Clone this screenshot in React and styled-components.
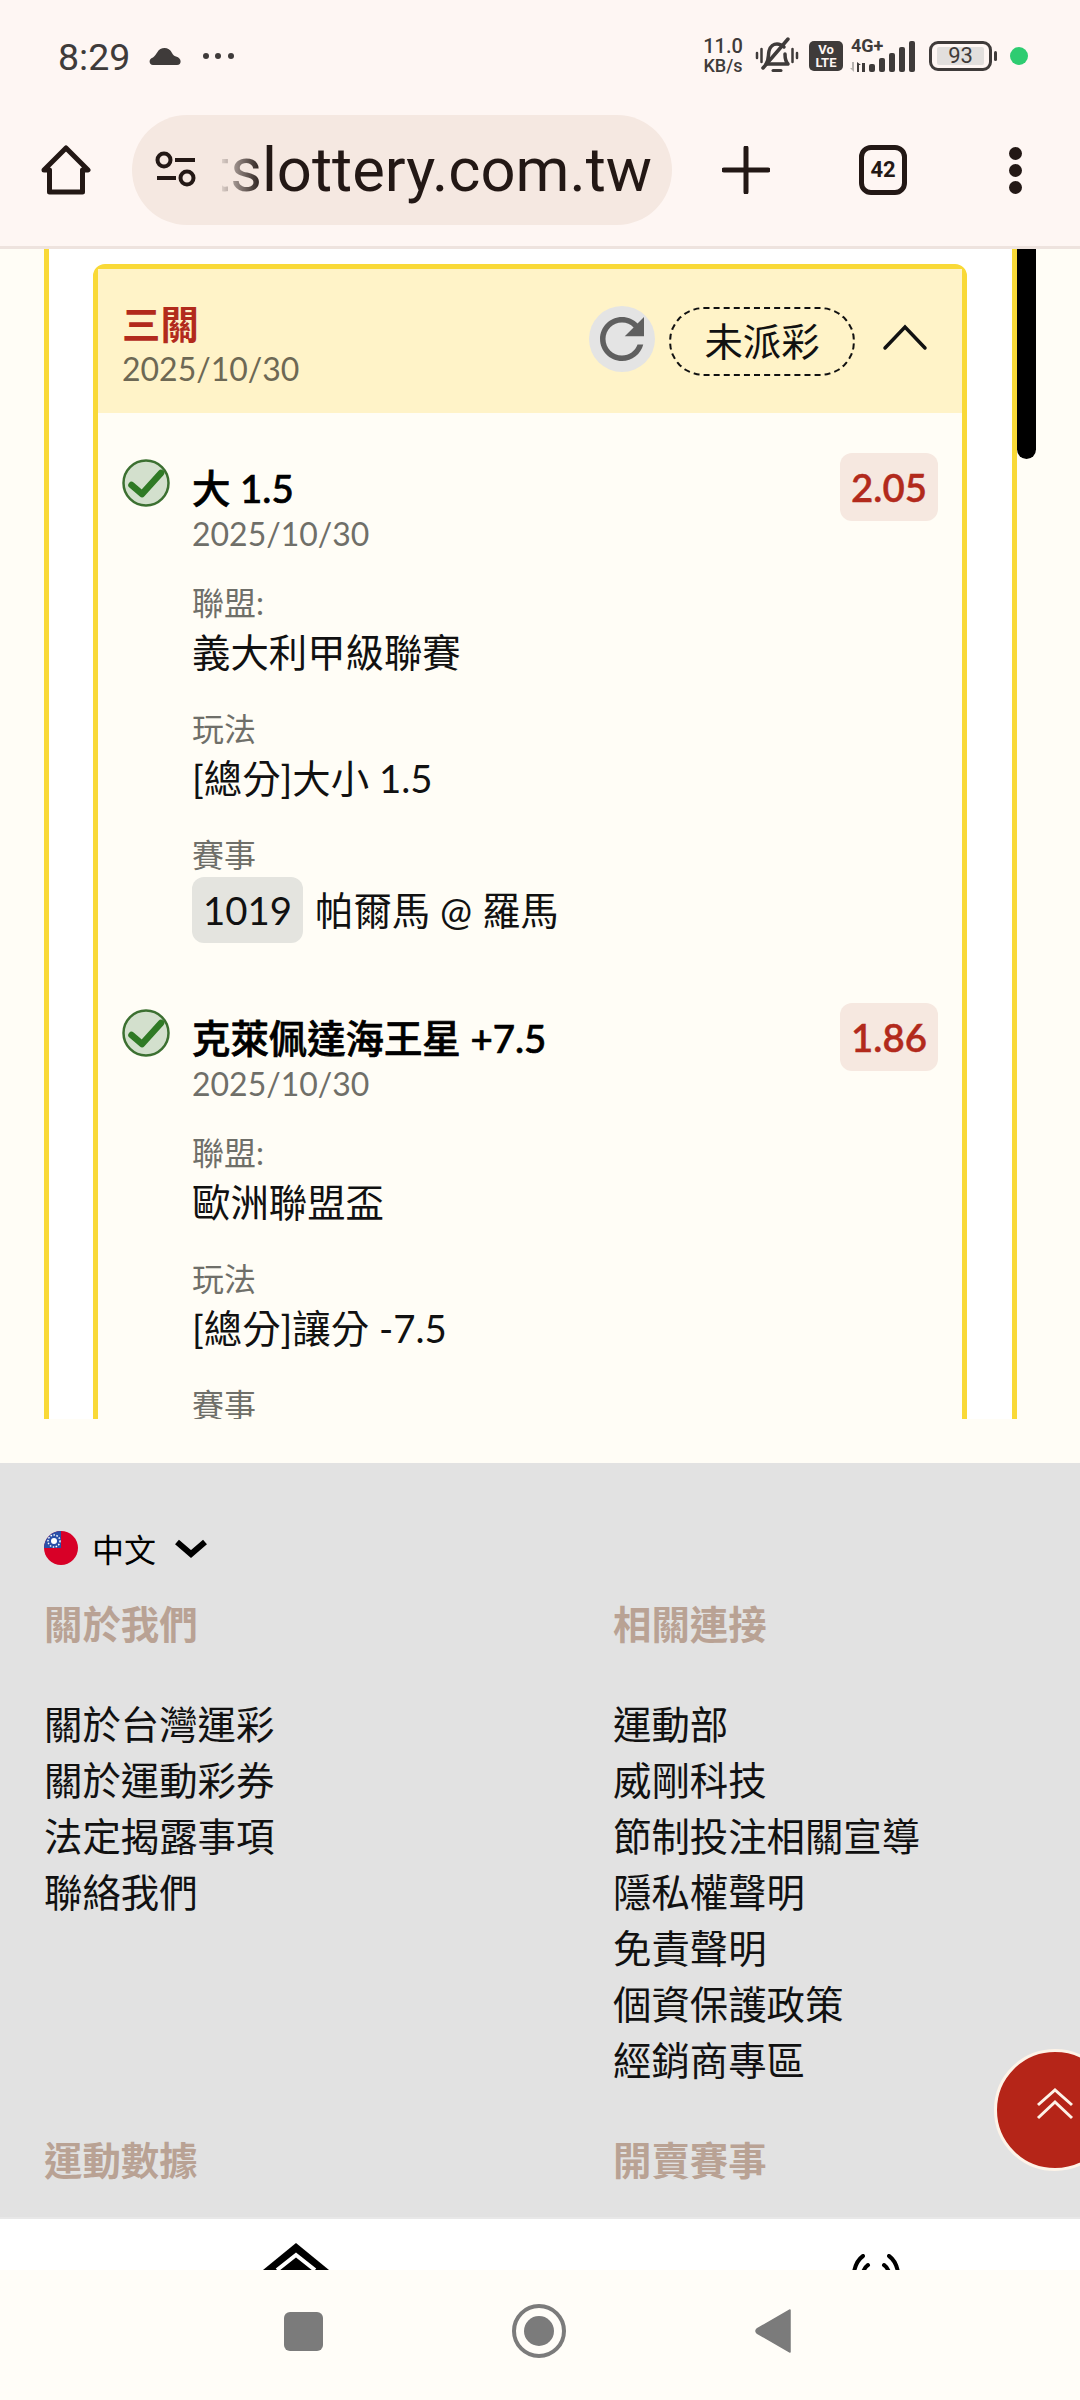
import React from "react";
import styled, { createGlobalStyle } from "styled-components";

const GlobalStyle = createGlobalStyle`
  html, body {
    margin: 0;
    padding: 0;
    background: #fffdf6;
  }
  * {
    box-sizing: border-box;
  }
`;

const picks = [
  {
    name: "大 1.5",
    odds: "2.05",
    league: "義大利甲級聯賽",
    play: "[總分]大小 1.5",
    code: "1019",
    game: "帕爾馬 @ 羅馬",
  },
  {
    name: "克萊佩達海王星 +7.5",
    odds: "1.86",
    league: "歐洲聯盟盃",
    play: "[總分]讓分 -7.5",
  },
];

const aboutLinks = ["關於台灣運彩", "關於運動彩券", "法定揭露事項", "聯絡我們"];
const relatedLinks = [
  "運動部",
  "威剛科技",
  "節制投注相關宣導",
  "隱私權聲明",
  "免責聲明",
  "個資保護政策",
  "經銷商專區",
];

const CheckIcon = () => (
  <svg width="48" height="48" viewBox="0 0 48 48">
    <circle cx="24" cy="24" r="22.5" fill="#d3e0cd" stroke="#3c7031" strokeWidth="2.5" />
    <path d="M9.5 26 L20 35 L39 14" fill="none" stroke="#2f7a25" strokeWidth="6.5" strokeLinejoin="round" strokeLinecap="round" />
  </svg>
);

const App = () => {
  return (
    <Screen>
      <GlobalStyle />
      <StatusBar>
        <Time>8:29</Time>
        <svg width="36" height="20" viewBox="0 0 36 20">
          <path d="M5 19 C1 19 0 13 5 11.500 C7 10 8 8 9.500 6 C12 1 21 0 24 7 C25 9 26 10 28 10.500 C34 12 34 19 29 19 Z" fill="#3f3b3a" />
        </svg>
        <svg width="34" height="8" viewBox="0 0 34 8">
          <circle cx="4" cy="4" r="3" fill="#3f3b3a" />
          <circle cx="16" cy="4" r="3" fill="#3f3b3a" />
          <circle cx="29" cy="4" r="3" fill="#3f3b3a" />
        </svg>
        <StatusRight>
          <Speed>
            <span>11.0</span>
            <small>KB/s</small>
          </Speed>
          <svg width="44" height="38" viewBox="0 0 44 38">
            <g fill="none" stroke="#3f3b3a" strokeLinecap="round">
              <path d="M11 27 C14 23 13 19 14 14 C15 9 19 7 22 7 C25 7 27 8 29 10 M30 17 C30 21 30 24 33 27 M11 27 H33" strokeWidth="3.5" />
              <path d="M8 31 L33 2" strokeWidth="3.500" />
              <path d="M2 16 V21 M6.500 12 V25 M37.500 12 V25 M42 16 V21" strokeWidth="2.500" />
              <path d="M18 33.500 H26" strokeWidth="3" />
            </g>
          </svg>
          <Volte>
            <span>Vo</span>
            <span>LTE</span>
          </Volte>
          <Network>
            <NetworkLabel>4G+</NetworkLabel>
            <svg width="67" height="32" viewBox="0 0 67 32">
              <g fill="#3f3b3a">
                <path d="M8 31 V21 L12 24 H10 V31 Z" />
                <rect x="13" y="22" width="3" height="9" />
                <rect x="20" y="23" width="6" height="8" rx="2" />
                <rect x="30" y="17" width="6" height="14" rx="2" />
                <rect x="40" y="12" width="6" height="19" rx="2" />
                <rect x="50" y="6" width="6" height="25" rx="2" />
                <rect x="60" y="0" width="6" height="31" rx="2" />
              </g>
              <path d="M5 21 V31 L1 27 H3 V21 Z" fill="#b5b1ae" />
            </svg>
          </Network>
          <Battery>
            <BatteryLevel>93</BatteryLevel>
          </Battery>
          <BatteryNub />
          <GreenDot />
        </StatusRight>
      </StatusBar>

      <Toolbar>
        <svg width="50" height="50" viewBox="0 0 50 50">
          <path d="M3 25 L25 3 L47 25 H41.500 V47 H8.500 V25 Z" fill="none" stroke="#231815" strokeWidth="5" strokeLinejoin="round" />
        </svg>
        <UrlPill>
          <svg width="44" height="38" viewBox="0 0 44 38">
            <g fill="none" stroke="#231815" strokeWidth="4">
              <circle cx="9" cy="9" r="6.500" />
              <circle cx="32" cy="27" r="6.500" />
              <path d="M20 9 H40 M2 27 H21" />
            </g>
          </svg>
          <UrlClip>
            <UrlText>tslottery.com.tw</UrlText>
          </UrlClip>
        </UrlPill>
        <svg width="48" height="48" viewBox="0 0 48 48">
          <path d="M24 2 V46 M2 24 H46" stroke="#231815" strokeWidth="5" strokeLinecap="round" />
        </svg>
        <TabCount>42</TabCount>
        <MenuDots>
          <i />
          <i />
          <i />
        </MenuDots>
      </Toolbar>

      <Content>
        <Panel>
          <Card>
            <CardHeader>
              <CardHeading>
                <CardTitle>三關</CardTitle>
                <CardDate>2025/10/30</CardDate>
              </CardHeading>
              <HeaderActions>
                <RefreshButton>
                  <svg width="66" height="66" viewBox="0 0 24 24">
                    <path
                      fill="#5f5f5f"
                      d="M17.650 6.350C16.200 4.900 14.210 4 12 4c-4.420 0-7.990 3.580-7.990 8s3.570 8 7.990 8c3.730 0 6.840-2.550 7.730-6h-2.080c-.82 2.330-3.040 4-5.650 4-3.310 0-6-2.690-6-6s2.690-6 6-6c1.660 0 3.140.69 4.220 1.780L13 11h7V4l-2.350 2.350z"
                    />
                  </svg>
                </RefreshButton>
                <StatusBadge>未派彩</StatusBadge>
                <svg width="46" height="28" viewBox="0 0 46 28">
                  <path d="M3 25 L23 4 L43 25" fill="none" stroke="#111" strokeWidth="3.500" strokeLinecap="round" />
                </svg>
              </HeaderActions>
            </CardHeader>
            <CardBody>
              {picks.map((pick) => (
                <Pick key={pick.name}>
                  <CheckWrap>
                    <CheckIcon />
                  </CheckWrap>
                  <PickMain>
                    <PickName>{pick.name}</PickName>
                    <PickDate>2025/10/30</PickDate>
                    <Field>
                      <FieldLabel>聯盟:</FieldLabel>
                      <FieldValue>{pick.league}</FieldValue>
                    </Field>
                    <Field>
                      <FieldLabel>玩法</FieldLabel>
                      <FieldValue>{pick.play}</FieldValue>
                    </Field>
                    <Field>
                      <FieldLabel>賽事</FieldLabel>
                      {pick.code && (
                        <GameRow>
                          <GameCode>{pick.code}</GameCode>
                          <FieldValue>{pick.game}</FieldValue>
                        </GameRow>
                      )}
                    </Field>
                  </PickMain>
                  <Odds>{pick.odds}</Odds>
                </Pick>
              ))}
            </CardBody>
          </Card>
        </Panel>
        <ScrollThumb />
      </Content>

      <Footer>
        <Language>
          <svg width="34" height="34" viewBox="0 0 34 34">
            <circle cx="17" cy="17" r="17" fill="#d80027" />
            <path d="M0 17 A17 17 0 0 1 17 0 V17 Z" fill="#2a4fa8" />
            <circle cx="10" cy="10" r="6" fill="none" stroke="#fff" strokeWidth="1.500" strokeDasharray="1.500 1.500" />
            <circle cx="10" cy="10" r="3" fill="#fff" />
          </svg>
          <LanguageName>中文</LanguageName>
          <svg width="34" height="20" viewBox="0 0 34 20">
            <path d="M3 4 L17 16 L31 4" fill="none" stroke="#000" strokeWidth="6" />
          </svg>
        </Language>
        <FooterGrid>
          <div>
            <FooterHeading>關於我們</FooterHeading>
            {aboutLinks.map((link) => (
              <FooterLink key={link}>{link}</FooterLink>
            ))}
          </div>
          <div>
            <FooterHeading>相關連接</FooterHeading>
            {relatedLinks.map((link) => (
              <FooterLink key={link}>{link}</FooterLink>
            ))}
          </div>
          <FooterHeading>運動數據</FooterHeading>
          <FooterHeading>開賣賽事</FooterHeading>
        </FooterGrid>
      </Footer>

      <BottomNav>
        <svg width="66" height="27" viewBox="0 0 66 27">
          <path d="M33 0 L66 27 H0 Z" fill="#000" />
          <path d="M14 27 L33 12 L52 27" fill="none" stroke="#fff" strokeWidth="4" />
        </svg>
        <svg width="50" height="16" viewBox="0 0 50 16">
          <g fill="none" stroke="#000" strokeWidth="4" strokeLinecap="round">
            <path d="M12 2 Q5 7 3 18 M17 11 Q14 13 12 18 M38 2 Q45 7 47 18 M33 11 Q36 13 38 18" />
          </g>
        </svg>
      </BottomNav>

      <SystemNav>
        <RecentKey />
        <svg width="54" height="54" viewBox="0 0 54 54">
          <circle cx="27" cy="27" r="25" fill="none" stroke="#7b7b7b" strokeWidth="4" />
          <circle cx="27" cy="27" r="15" fill="#7b7b7b" />
        </svg>
        <svg width="36" height="46" viewBox="0 0 36 46">
          <path d="M35 2 V44 L2 25 Q0 23 2 21 Z" fill="#7b7b7b" stroke="#7b7b7b" strokeWidth="1.500" strokeLinejoin="round" />
        </svg>
      </SystemNav>

      <ScrollTop>
        <svg width="38" height="32" viewBox="0 0 38 32">
          <path d="M2 17 L19 2 L36 17 M2 30 L19 14 L36 30" fill="none" stroke="#fdf3e8" strokeWidth="3" />
        </svg>
      </ScrollTop>
    </Screen>
  );
};

export default App;

const Screen = styled.div`
  position: relative;
  display: flex;
  flex-direction: column;
  width: 1080px;
  height: 2400px;
  overflow: hidden;
  background: #fffdf6;
  font-family: Lato, "Noto Sans CJK TC", sans-serif;
  color: #111;
`;

const StatusBar = styled.div`
  display: flex;
  align-items: center;
  gap: 18px;
  height: 112px;
  padding: 0 52px 0 58px;
  background: #fef6f3;
  color: #3f3b3a;
`;

const Time = styled.div`
  width: 72px;
  padding-top: 2px;
  font-family: Roboto, sans-serif;
  font-size: 37.5px;
`;

const StatusRight = styled.div`
  display: flex;
  align-items: center;
  margin-left: auto;
  > svg:first-of-type {
    margin-left: 11px;
  }
`;

const Speed = styled.div`
  display: flex;
  flex-direction: column;
  align-items: center;
  width: 42px;
  font-family: Roboto, sans-serif;
  font-weight: 500;
  line-height: 19px;
  font-size: 20px;
  small {
    font-size: 18px;
  }
`;

const Volte = styled.div`
  display: flex;
  flex-direction: column;
  align-items: center;
  width: 34px;
  height: 30px;
  margin-left: 10px;
  padding-top: 2px;
  border-radius: 5px;
  background: #3f3b3a;
  color: #fef5f2;
  font-family: Roboto, sans-serif;
  font-size: 13px;
  font-weight: 700;
  line-height: 13px;
`;

const Network = styled.div`
  position: relative;
  width: 67px;
  height: 34px;
  margin-left: 6px;
  display: flex;
  align-items: flex-end;
`;

const NetworkLabel = styled.span`
  position: absolute;
  left: 2px;
  top: -4px;
  font-family: Roboto, sans-serif;
  font-size: 18px;
  font-weight: 700;
`;

const Battery = styled.div`
  display: flex;
  width: 63px;
  height: 30px;
  margin-left: 13px;
  padding: 3px 5px;
  border: 3px solid #3f3b3a;
  border-radius: 9px;
`;

const BatteryLevel = styled.div`
  flex: 1;
  border-radius: 2px;
  background: #e2dfdd;
  text-align: center;
  font-family: Roboto, sans-serif;
  font-size: 22px;
  line-height: 18px;
`;

const BatteryNub = styled.div`
  width: 3px;
  height: 10px;
  margin-left: 2px;
  border-radius: 2px;
  background: #3f3b3a;
`;

const GreenDot = styled.div`
  width: 18px;
  height: 18px;
  margin-left: 13px;
  border-radius: 50%;
  background: #2ecc71;
`;

const Toolbar = styled.div`
  display: flex;
  align-items: center;
  height: 137px;
  padding: 0 0 18px 41px;
  background: #fef6f3;
  border-bottom: 3px solid #eee3de;
  > svg:first-child {
    margin-right: 41px;
  }
  > svg:nth-child(3) {
    margin-left: 50px;
  }
`;

const UrlPill = styled.div`
  display: flex;
  align-items: center;
  width: 540px;
  height: 110px;
  padding-left: 23px;
  border-radius: 55px;
  background: #f5e8e1;
`;

const UrlClip = styled.div`
  display: flex;
  justify-content: flex-end;
  width: 430px;
  margin-left: 23px;
  overflow: hidden;
  mask-image: linear-gradient(to right, rgba(0, 0, 0, 0.12) 0, rgba(0, 0, 0, 0.4) 12px, #000 40px);
`;

const UrlText = styled.div`
  font-family: Roboto, sans-serif;
  font-size: 61.5px;
  line-height: 84px;
  color: #231815;
  white-space: nowrap;
`;

const TabCount = styled.div`
  width: 48px;
  height: 50px;
  margin-left: 89px;
  border: 5px solid #231815;
  border-radius: 12px;
  text-align: center;
  font-family: Roboto, sans-serif;
  font-size: 22px;
  font-weight: 700;
  line-height: 40px;
  color: #231815;
`;

const MenuDots = styled.div`
  display: flex;
  flex-direction: column;
  gap: 4px;
  margin-left: 102px;
  i {
    width: 13px;
    height: 13px;
    border-radius: 50%;
    background: #231815;
  }
`;

const Content = styled.div`
  position: relative;
  height: 1214px;
  padding: 0 63px 44px 44px;
  background: #fffdf6;
`;

const Panel = styled.div`
  height: 1170px;
  padding: 15px 45px 0 44px;
  overflow: hidden;
  background: #fff;
  border-left: 5px solid #f9d937;
  border-right: 5px solid #f9d937;
`;

const ScrollThumb = styled.div`
  position: absolute;
  top: 0;
  left: 1017px;
  width: 19px;
  height: 210px;
  border-radius: 0 0 10px 10px;
  background: #000;
`;

const Card = styled.div`
  border: 5px solid #f9d937;
  border-radius: 12px 12px 0 0;
  background: #fffdf6;
`;

const CardHeader = styled.div`
  display: flex;
  align-items: center;
  justify-content: space-between;
  height: 144px;
  padding: 0 34px 0 24px;
  background: #fff3c8;
`;

const CardHeading = styled.div`
  padding-top: 9px;
`;

const CardTitle = styled.div`
  font-size: 38.4px;
  font-weight: 700;
  line-height: 46px;
  color: #b22a1c;
`;

const CardDate = styled.div`
  font-size: 32px;
  line-height: 44px;
  color: #6d6854;
`;

const HeaderActions = styled.div`
  display: flex;
  align-items: center;
  > svg:last-child {
    margin-left: 27px;
    margin-bottom: 8px;
  }
`;

const RefreshButton = styled.div`
  width: 66px;
  height: 66px;
  border-radius: 50%;
  background: #e4e4e4;
  margin-bottom: 4px;
`;

const StatusBadge = styled.div`
  width: 186px;
  height: 69px;
  margin-left: 14px;
  border: 2px dashed #111;
  border-radius: 35px;
  text-align: center;
  font-size: 38.4px;
  line-height: 65px;
`;

const CardBody = styled.div`
  padding-top: 40px;
`;

const Pick = styled.div`
  display: flex;
  align-items: flex-start;
  padding: 0 24px 60px 24px;
`;

const CheckWrap = styled.div`
  width: 48px;
  height: 48px;
  margin-top: 6px;
  margin-right: 22px;
  flex: none;
`;

const PickMain = styled.div`
  flex: 1;
  padding-top: 10px;
`;

const PickName = styled.div`
  font-size: 38.4px;
  font-weight: 500;
  -webkit-text-stroke: 0.7px #000;
  line-height: 51px;
  color: #000;
`;

const PickDate = styled.div`
  font-size: 32px;
  line-height: 40px;
  color: #6f6f69;
  margin-bottom: 27px;
`;

const Field = styled.div`
  margin-bottom: 28px;
  &:last-child {
    margin-bottom: 0;
  }
`;

const FieldLabel = styled.div`
  font-size: 32px;
  line-height: 44px;
  color: #6f6f69;
`;

const FieldValue = styled.div`
  font-size: 38.4px;
  line-height: 54px;
  color: #111;
  white-space: nowrap;
`;

const GameRow = styled.div`
  display: flex;
  align-items: center;
  gap: 12px;
`;

const GameCode = styled.div`
  width: 111px;
  height: 66px;
  border-radius: 12px;
  background: #e4e4df;
  text-align: center;
  font-size: 38.4px;
  line-height: 66px;
`;

const Odds = styled.div`
  flex: none;
  width: 98px;
  height: 68px;
  border-radius: 12px;
  background: #f6e8e0;
  text-align: center;
  font-size: 38.4px;
  font-weight: 600;
  -webkit-text-stroke: 0.4px #b22a1c;
  line-height: 68px;
  color: #b22a1c;
`;

const Footer = styled.div`
  height: 754px;
  padding: 62px 0 0 44px;
  overflow: hidden;
  background: #e2e2e2;
`;

const Language = styled.div`
  display: flex;
  align-items: center;
  height: 46px;
  > svg:last-child {
    margin-left: 18px;
  }
`;

const LanguageName = styled.div`
  margin-left: 14px;
  font-size: 32px;
  color: #000;
`;

const FooterGrid = styled.div`
  display: grid;
  grid-template-columns: 569px 1fr;
  row-gap: 47px;
  margin-top: 28px;
`;

const FooterHeading = styled.div`
  height: 50px;
  margin-bottom: 47px;
  font-size: 38.4px;
  font-weight: 700;
  line-height: 50px;
  color: #b9a294;
`;

const FooterLink = styled.div`
  font-size: 38.4px;
  line-height: 56px;
  color: #111;
`;

const BottomNav = styled.div`
  display: flex;
  align-items: flex-end;
  justify-content: space-between;
  height: 53px;
  padding: 0 179px 0 263px;
  border-top: 2px solid #e8e8e8;
  background: #fff;
`;

const SystemNav = styled.div`
  display: flex;
  align-items: center;
  gap: 189px;
  height: 130px;
  padding: 0 0 8px 284px;
  background: #fffdf8;
`;

const RecentKey = styled.div`
  width: 39px;
  height: 39px;
  border-radius: 6px;
  background: #7b7b7b;
`;

const ScrollTop = styled.div`
  position: absolute;
  top: 2049px;
  left: 994px;
  display: flex;
  align-items: center;
  justify-content: center;
  width: 122px;
  height: 122px;
  padding-bottom: 12px;
  border: 3px solid #fdf3e8;
  border-radius: 50%;
  background: #b52518;
`;
